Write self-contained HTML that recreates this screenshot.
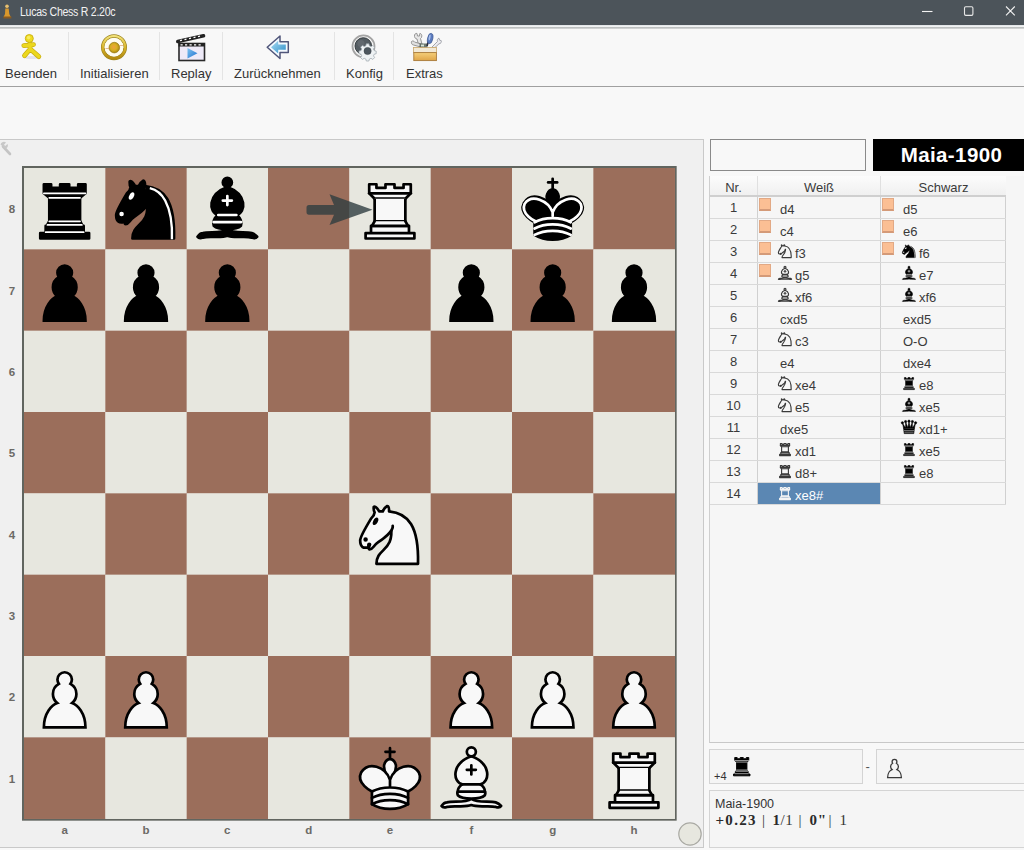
<!DOCTYPE html>
<html><head><meta charset="utf-8"><style>
*{margin:0;padding:0;box-sizing:border-box}
body{width:1024px;height:850px;overflow:hidden;background:#f8f8f8;font-family:"Liberation Sans",sans-serif;position:relative}
.abs{position:absolute}
.lbl{font-family:"Liberation Sans",sans-serif;font-size:11.5px;font-weight:bold;fill:#6c6a66}
#title{left:0;top:0;width:1024px;height:25px;background:#4c545a}
#tl1{left:0;top:25px;width:1024px;height:2px;background:linear-gradient(#dfe3e5,#f6f8f8)}
#tl2{left:0;top:27px;width:1024px;height:2px;background:linear-gradient(#b3b7b7,#dadcdc)}
#title .t{left:19.5px;top:5px;font-size:12px;letter-spacing:-0.3px;transform:scaleX(0.88);transform-origin:0 0;color:#f2f2f2;white-space:nowrap}
#toolbar{left:0;top:29px;width:1024px;height:58px;background:#f8f8f8;border-bottom:1px solid #a0a0a0}
.tb{position:absolute;top:37px;font-size:13px;color:#333;white-space:nowrap}
.sep{position:absolute;top:3px;width:1px;height:48px;background:#e4e4e4}
#bpanel{left:0;top:139px;width:704px;height:709px;border:1px solid #c9c9c9;border-left:none;background:#f0f0f0}

#wname{left:710px;top:139px;width:156px;height:32px;border:1px solid #8a8a8a;background:#f8f8f8}
#bname{left:873px;top:139px;width:151px;height:32px;background:#000;color:#fff;font-weight:bold;font-size:20.5px;letter-spacing:0.4px;line-height:32px;text-align:center;padding-left:6px}
#tbl{left:709px;top:176px;width:315px;height:567px;border-left:1px solid #cfcfcf;border-bottom:1px solid #c8c8c8;background:#f6f6f6}
.hdr{position:absolute;left:0;top:0;width:296px;height:21px;box-sizing:border-box;background:linear-gradient(#fcfcfc,#f0f0f0);border-bottom:2px solid #cfcfcf;font-size:13px;color:#3a3a3a}
.hdr div{position:absolute;top:0;height:19px;line-height:19px;padding-top:2px;text-align:center}
.h1{left:0;width:48px;border-right:1px solid #e0e0e0}
.h2{left:48px;width:123px;border-right:1px solid #e0e0e0}
.h3{left:171px;width:125px}
.row{position:absolute;left:0;width:296px;height:22px;border-bottom:1px solid #d9d9d9;font-size:13px;color:#3a3a3a}
.row>div{position:absolute;top:0;height:21px}
.num{left:0;width:48px;text-align:center;line-height:22px;border-right:1px solid #d0d0d0}
.wcell{left:48px;width:123px;border-right:1px solid #d0d0d0}
.bcell{left:171px;width:125px;border-right:1px solid #d0d0d0}
.sel{background:#5b87b3;color:#fff}

.obox{position:absolute;left:1px;top:1px;width:12px;height:13px;background:#fbbf94;border:1px solid #e2a985;border-bottom:2px solid #d49a78}
.mv{position:absolute;left:22px;top:2px;line-height:22px;white-space:nowrap}
.mv.hf{padding-left:15px}
.bcell .mv.hf{padding-left:16px}
.bcell .fig{left:-3.3px}
.fig{position:absolute;left:-4.1px;top:-0.6px;width:18px;height:18px}
#cap1{left:709px;top:749px;width:154px;height:35px;border:1px solid #d4d4d4;background:#f5f5f5}
#cap2{left:876px;top:749px;width:148px;height:35px;border:1px solid #d4d4d4;border-right:none;background:#f5f5f5}
.plus4{position:absolute;left:4px;top:19.5px;font-size:11px;color:#333}
.capfig{position:absolute;left:17.5px;top:1.8px;width:27.5px;height:27.5px}
.capfig2{position:absolute;left:3.5px;top:3.5px;width:27px;height:27px}
#dash{left:865.5px;top:759px;font-size:13px;color:#555}
#info{left:709px;top:790px;width:315px;height:58px;border:1px solid #d4d4d4;border-right:none;background:#f5f5f5}
#info .l1{position:absolute;left:5px;top:6px;font-size:12.5px;color:#333}
#info .t2{position:absolute;top:20.5px;font-size:15px;color:#333;font-family:"Liberation Serif",serif;white-space:nowrap}
#info .b{font-weight:bold;color:#2a2a2a}
</style></head><body>
<div id="title" class="abs"><div class="t abs">Lucas Chess R 2.20c</div></div><div id="tl1" class="abs"></div><div id="tl2" class="abs"></div>
<div id="toolbar" class="abs">
<div class="tb" style="left:5px">Beenden</div>
<div class="sep" style="left:68px"></div>
<div class="tb" style="left:80px">Initialisieren</div>
<div class="sep" style="left:159px"></div>
<div class="tb" style="left:171px">Replay</div>
<div class="sep" style="left:222px"></div>
<div class="tb" style="left:234px">Zurücknehmen</div>
<div class="sep" style="left:334px"></div>
<div class="tb" style="left:346px">Konfig</div>
<div class="sep" style="left:393px"></div>
<div class="tb" style="left:406px">Extras</div>
</div>
<div id="bpanel" class="abs"></div>
<svg id="boardsvg" width="1024" height="850" viewBox="0 0 1024 850" style="position:absolute;left:0;top:0">
<defs>
<symbol id="wK" viewBox="0 0 45 45"><g fill="none" fill-rule="evenodd" stroke="#000" stroke-linecap="round" stroke-linejoin="round" stroke-width="1.5"><path stroke-linejoin="miter" d="M22.5 11.63V6M20 8h5"/><path fill="#f8f8f8" stroke-linecap="butt" stroke-linejoin="miter" d="M22.5 25s4.5-7.5 3-10.5c0 0-1-2.5-3-2.5s-3 2.5-3 2.5c-1.5 3 3 10.5 3 10.5"/><path fill="#f8f8f8" d="M12.5 37c5.5 3.5 14.5 3.5 20 0v-7s9-4.5 6-10.5c-4-6.5-13.5-3.5-16 4V27v-3.5c-2.5-7.5-12-10.5-16-4-3 6 6 10.5 6 10.5v7"/><path d="M12.5 30c5.5-3 14.5-3 20 0m-20 3.5c5.5-3 14.5-3 20 0m-20 3.5c5.5-3 14.5-3 20 0"/></g></symbol>
<symbol id="wR" viewBox="0 0 45 45"><g fill="#f8f8f8" fill-rule="evenodd" stroke="#000" stroke-linecap="round" stroke-linejoin="round" stroke-width="1.5"><path stroke-linecap="butt" d="M9 39h27v-3H9v3zm3-3v-4h21v4H12zm-1-22V9h4v2h5V9h5v2h5V9h4v5"/><path d="M34 14l-3 3H14l-3-3"/><path stroke-linecap="butt" stroke-linejoin="miter" d="M31 17v12.5H14V17"/><path d="M31 29.5l1.5 2.5h-20l1.5-2.5"/><path fill="none" stroke-linejoin="miter" d="M11 14h23"/></g></symbol>
<symbol id="wB" viewBox="0 0 45 45"><g fill="none" fill-rule="evenodd" stroke="#000" stroke-linecap="round" stroke-linejoin="round" stroke-width="1.5"><g fill="#f8f8f8" stroke-linecap="butt"><path d="M9 36c3.39-.97 10.11.43 13.5-2 3.39 2.43 10.11 1.03 13.5 2 0 0 1.650.54 3 2-.68.97-1.650.99-3 .5-3.39-.97-10.11.46-13.5-1-3.39 1.46-10.110.03-13.5 1-1.354.49-2.323.47-3-.5 1.354-1.94 3-2 3-2z"/><path d="M15 32c2.5 2.5 12.5 2.5 15 0 .5-1.5 0-2 0-2 0-2.5-2.5-4-2.5-4 5.5-1.5 6-11.5-5-15.5-11 4-10.5 14-5 15.5 0 0-2.5 1.5-2.5 4 0 0-.5.5 0 2z"/><path d="M25 8a2.5 2.5 0 1 1-5 0 2.5 2.5 0 1 1 5 0z"/></g><path stroke-linejoin="miter" d="M17.5 26h10M15 30h15m-7.5-14.5v5M20 18h5"/></g></symbol>
<symbol id="wN" viewBox="0 0 45 45"><g fill="none" fill-rule="evenodd" stroke="#000" stroke-linecap="round" stroke-linejoin="round" stroke-width="1.5"><path fill="#f8f8f8" d="M22 10c10.5 1 16.5 8 16 29H15c0-9 10-6.5 8-21"/><path fill="#f8f8f8" d="M24 18c.38 2.91-5.550 7.37-8 9-3 2-2.820 4.34-5 4-1.042-.94 1.41-3.04 0-3-1 0 .19 1.23-1 2-1 0-4.003 1-4-4 0-2 6-12 6-12s1.89-1.9 2-3.5c-.73-.994-.5-2-.5-3 1-1 3 2.5 3 2.5h2s.78-1.992 2.5-3c1 0 1 3 1 3"/><path fill="#000" d="M9.5 25.5a.5.5 0 1 1-1 0 .5.5 0 1 1 1 0zm5.433-9.75a.5 1.5 30 1 1-.866-.5.5 1.5 30 1 1 .866.5z"/></g></symbol>
<symbol id="wP" viewBox="0 0 45 45"><path fill="#f8f8f8" stroke="#000" stroke-linecap="round" stroke-width="1.5" d="M22.5 9c-2.21 0-4 1.79-4 4 0 .89.29 1.71.78 2.41C17.33 16.5 16 18.59 16 21c0 2.03.94 3.84 2.41 5.03C15.41 27.09 11 31.58 11 39.5h23c0-7.92-4.41-12.41-7.410-13.47C28.06 24.84 29 23.03 29 21c0-2.41-1.330-4.5-3.280-5.59.49-.7.78-1.52.78-2.41 0-2.21-1.79-4-4-4z"/></symbol>
<symbol id="bK" viewBox="0 0 45 45"><g fill="none" fill-rule="evenodd" stroke="#000" stroke-linecap="round" stroke-linejoin="round" stroke-width="1.5"><path stroke-linejoin="miter" d="M22.5 11.63V6"/><path fill="#000" stroke-linecap="butt" stroke-linejoin="miter" d="M22.5 25s4.5-7.5 3-10.5c0 0-1-2.5-3-2.5s-3 2.5-3 2.5c-1.5 3 3 10.5 3 10.5"/><path fill="#000" d="M12.5 37c5.5 3.5 14.5 3.5 20 0v-7s9-4.5 6-10.5c-4-6.5-13.5-3.5-16 4V27v-3.5c-2.5-7.5-12-10.5-16-4-3 6 6 10.5 6 10.5v7"/><path stroke-linejoin="miter" d="M20 8h5"/><path stroke="#fff" d="M32 29.5s8.5-4 6.03-9.65C34.15 14 25 18 22.5 24.5v2.1-2.1C20 18 10.85 14 6.97 19.85 4.5 25.5 13 29.5 13 29.5"/><path stroke="#fff" d="M12.5 30c5.5-3 14.5-3 20 0m-20 3.5c5.5-3 14.5-3 20 0m-20 3.5c5.5-3 14.5-3 20 0"/></g></symbol>
<symbol id="bR" viewBox="0 0 45 45"><g fill-rule="evenodd" stroke="#000" stroke-linecap="round" stroke-linejoin="round" stroke-width="1.5"><path stroke-linecap="butt" d="M9 39h27v-3H9v3zm3.5-7l1.5-2.5h17l1.5 2.5h-20zm-.5 4v-4h21v4H12z"/><path stroke-linecap="butt" stroke-linejoin="miter" d="M14 29.5v-13h17v13H14z"/><path stroke-linecap="butt" d="M14 16.5L11 14h23l-3 2.5H14zM11 14V9h4v2h5V9h5v2h5V9h4v5H11z"/><path fill="none" stroke="#fff" stroke-linejoin="miter" stroke-width="1" d="M12 35.5h21m-20-4h19m-18-2h17m-17-13h17M11 14h23"/></g></symbol>
<symbol id="bB" viewBox="0 0 45 45"><g fill="none" fill-rule="evenodd" stroke="#000" stroke-linecap="round" stroke-linejoin="round" stroke-width="1.5"><g fill="#000" stroke-linecap="butt"><path d="M9 36c3.39-.97 10.11.43 13.5-2 3.39 2.43 10.11 1.03 13.5 2 0 0 1.65.54 3 2-.68.97-1.65.99-3 .5-3.39-.97-10.11.46-13.5-1-3.39 1.46-10.11.03-13.5 1-1.354.49-2.323.47-3-.5 1.354-1.94 3-2 3-2z"/><path d="M15 32c2.5 2.5 12.5 2.5 15 0 .5-1.5 0-2 0-2 0-2.5-2.5-4-2.5-4 5.5-1.5 6-11.5-5-15.5-11 4-10.5 14-5 15.5 0 0-2.5 1.5-2.5 4 0 0-.5.5 0 2z"/><path d="M25 8a2.5 2.5 0 1 1-5 0 2.5 2.5 0 1 1 5 0z"/></g><path stroke="#fff" stroke-linejoin="miter" d="M17.5 26h10M15 30h15m-7.5-14.5v5M20 18h5"/></g></symbol>
<symbol id="bN" viewBox="0 0 45 45"><g fill="none" fill-rule="evenodd" stroke="#000" stroke-linecap="round" stroke-linejoin="round" stroke-width="1.5"><path fill="#000" d="M22 10c10.5 1 16.5 8 16 29H15c0-9 10-6.5 8-21"/><path fill="#000" d="M24 18c.38 2.91-5.55 7.37-8 9-3 2-2.82 4.34-5 4-1.042-.94 1.41-3.04 0-3-1 0 .19 1.23-1 2-1 0-4.003 1-4-4 0-2 6-12 6-12s1.89-1.9 2-3.5c-.73-.994-.5-2-.5-3 1-1 3 2.5 3 2.5h2s.78-1.992 2.5-3c1 0 1 3 1 3"/><path fill="#fff" stroke="#fff" d="M9.5 25.5a.5.5 0 1 1-1 0 .5.5 0 1 1 1 0zm5.433-9.75a.5 1.5 30 1 1-.866-.5.5 1.5 30 1 1 .866.5z"/><path fill="none" stroke="#fff" stroke-width="1.3" stroke-linecap="butt" d="M24.6 11.1 C28 11.9 30.8 13.6 33.1 18 C35.5 22.5 37.2 29.5 36.85 39.4"/></g></symbol>
<symbol id="bP" viewBox="0 0 45 45"><path stroke="#000" stroke-linecap="round" stroke-width="1.5" d="M22.5 9c-2.21 0-4 1.79-4 4 0 .89.29 1.71.78 2.41C17.33 16.5 16 18.59 16 21c0 2.03.94 3.84 2.41 5.03C15.41 27.09 11 31.58 11 39.5h23c0-7.92-4.41-12.41-7.41-13.47C28.06 24.84 29 23.03 29 21c0-2.41-1.33-4.5-3.28-5.59.49-.7.78-1.52.78-2.41 0-2.21-1.79-4-4-4z"/></symbol>

<symbol id="fN" viewBox="0 0 45 45"><g fill="none" stroke="#3a3a3a" stroke-linecap="round" stroke-linejoin="round" stroke-width="2.8"><path d="M22 10c10.5 1 16.5 8 16 29H15c0-9 10-6.5 8-21"/><path d="M24 18c.38 2.91-5.55 7.37-8 9-3 2-2.82 4.34-5 4-1.042-.94 1.41-3.04 0-3-1 0 .19 1.23-1 2-1 0-4.003 1-4-4 0-2 6-12 6-12s1.89-1.9 2-3.5c-.73-.994-.5-2-.5-3 1-1 3 2.5 3 2.5h2s.78-1.992 2.5-3c1 0 1 3 1 3"/></g></symbol>
<symbol id="fB" viewBox="0 0 45 45"><g fill="none" stroke="#3a3a3a" stroke-linecap="round" stroke-linejoin="round" stroke-width="2.8"><path d="M9 36c3.39-.97 10.11.43 13.5-2 3.39 2.43 10.11 1.03 13.5 2 0 0 1.65.54 3 2-.68.97-1.65.99-3 .5-3.39-.97-10.11.46-13.5-1-3.39 1.46-10.11.03-13.5 1-1.354.49-2.323.47-3-.5 1.354-1.94 3-2 3-2z"/><path d="M15 32c2.5 2.5 12.5 2.5 15 0 .5-1.5 0-2 0-2 0-2.5-2.5-4-2.5-4 5.5-1.5 6-11.5-5-15.5-11 4-10.5 14-5 15.5 0 0-2.5 1.5-2.5 4 0 0-.5.5 0 2z"/><path d="M25 8a2.5 2.5 0 1 1-5 0 2.5 2.5 0 1 1 5 0z"/><path d="M17.5 26h10M15 30h15m-7.5-14.5v5M20 18h5"/></g></symbol>
<symbol id="fR" viewBox="0 0 45 45"><g fill="none" stroke="#3a3a3a" stroke-linecap="round" stroke-linejoin="round" stroke-width="2.8"><path stroke-linecap="butt" d="M9 39h27v-3H9v3zm3-3v-4h21v4H12zm-1-22V9h4v2h5V9h5v2h5V9h4v5"/><path d="M34 14l-3 3H14l-3-3"/><path d="M31 17v12.5H14V17"/><path d="M31 29.5l1.5 2.5h-20l1.5-2.5"/><path d="M11 14h23"/></g></symbol>
<symbol id="fRw" viewBox="0 0 45 45"><g fill="none" stroke="#f4f4f4" stroke-linecap="round" stroke-linejoin="round" stroke-width="2.8"><path stroke-linecap="butt" d="M9 39h27v-3H9v3zm3-3v-4h21v4H12zm-1-22V9h4v2h5V9h5v2h5V9h4v5"/><path d="M34 14l-3 3H14l-3-3"/><path d="M31 17v12.5H14V17"/><path d="M31 29.5l1.5 2.5h-20l1.5-2.5"/><path d="M11 14h23"/></g></symbol>
<symbol id="fP" viewBox="0 0 45 45"><path fill="none" stroke="#3a3a3a" stroke-linecap="round" stroke-width="2.2" d="M22.5 9c-2.21 0-4 1.79-4 4 0 .89.29 1.71.78 2.41C17.33 16.5 16 18.59 16 21c0 2.030.94 3.84 2.41 5.03C15.41 27.09 11 31.58 11 39.5h23c0-7.92-4.41-12.41-7.41-13.47C28.06 24.84 29 23.03 29 21c0-2.41-1.33-4.5-3.28-5.59.49-.7.78-1.52.78-2.41 0-2.21-1.79-4-4-4z"/></symbol>
<symbol id="fq" viewBox="0 0 45 45"><g fill="#000" stroke="#000" stroke-width="1.5" stroke-linejoin="round"><circle cx="6" cy="12" r="2.9"/><circle cx="14" cy="9" r="2.9"/><circle cx="22.5" cy="8" r="2.9"/><circle cx="31" cy="9" r="2.9"/><circle cx="39" cy="12" r="2.9"/><path d="M9 26c8.5-1.5 21-1.5 27 0l2.5-12.5L31 25l-.3-14.1-5.2 13.6-3-14.5-3 14.5-5.2-13.6L14 25 6.5 13.5 9 26z"/><path d="M9 26 L36 26 L34.5 39 L10.5 39 Z"/></g><path d="M10 31.5h25M11 35.5h23" stroke="#bbb" stroke-width="1.6"/></symbol>
<symbol id="bQ" viewBox="0 0 45 45"><g fill-rule="evenodd" stroke="#000" stroke-linecap="round" stroke-linejoin="round" stroke-width="1.5"><g stroke="none"><circle cx="6" cy="12" r="2.75"/><circle cx="14" cy="9" r="2.75"/><circle cx="22.5" cy="8" r="2.75"/><circle cx="31" cy="9" r="2.75"/><circle cx="39" cy="12" r="2.75"/></g><path stroke-linecap="butt" d="M9 26c8.5-1.5 21-1.5 27 0l2.5-12.5L31 25l-.3-14.1-5.2 13.6-3-14.5-3 14.5-5.2-13.6L14 25 6.5 13.5 9 26z"/><path stroke-linecap="butt" d="M9 26c0 2 1.5 2 2.5 4 1 1.5 1 1 .5 3.5-1.5 1-1.5 2.5-1.5 2.5-1.5 1.5.5 2.5.5 2.5 6.5 1 16.5 1 23 0 0 0 1.5-1 0-2.5 0 0 .5-1.5-1-2.5-.5-2.5-.5-2 .5-3.5 1-2 2.5-2 2.5-4-8.5-1.5-18.5-1.5-27 0z"/><path fill="none" stroke-linecap="butt" d="M11 38.5a35 35 1 0 0 23 0"/><path fill="none" stroke="#ececec" d="M11 29a35 35 1 0 1 23 0m-21.5 2.5h20m-21 3a35 35 1 0 0 22 0m-23 3a35 35 1 0 0 24 0"/></g></symbol>
</defs>
<rect x="23" y="167" width="652.67" height="652.67" fill="none" stroke="#61655f" stroke-width="2"/>
<rect x="24.00" y="168.00" width="81.63" height="81.63" fill="#e7e7df"/><rect x="105.33" y="168.00" width="81.63" height="81.63" fill="#9b6e5b"/><rect x="186.67" y="168.00" width="81.63" height="81.63" fill="#e7e7df"/><rect x="268.00" y="168.00" width="81.63" height="81.63" fill="#9b6e5b"/><rect x="349.33" y="168.00" width="81.63" height="81.63" fill="#e7e7df"/><rect x="430.67" y="168.00" width="81.63" height="81.63" fill="#9b6e5b"/><rect x="512.00" y="168.00" width="81.63" height="81.63" fill="#e7e7df"/><rect x="593.34" y="168.00" width="81.63" height="81.63" fill="#9b6e5b"/><rect x="24.00" y="249.33" width="81.63" height="81.63" fill="#9b6e5b"/><rect x="105.33" y="249.33" width="81.63" height="81.63" fill="#e7e7df"/><rect x="186.67" y="249.33" width="81.63" height="81.63" fill="#9b6e5b"/><rect x="268.00" y="249.33" width="81.63" height="81.63" fill="#e7e7df"/><rect x="349.33" y="249.33" width="81.63" height="81.63" fill="#9b6e5b"/><rect x="430.67" y="249.33" width="81.63" height="81.63" fill="#e7e7df"/><rect x="512.00" y="249.33" width="81.63" height="81.63" fill="#9b6e5b"/><rect x="593.34" y="249.33" width="81.63" height="81.63" fill="#e7e7df"/><rect x="24.00" y="330.67" width="81.63" height="81.63" fill="#e7e7df"/><rect x="105.33" y="330.67" width="81.63" height="81.63" fill="#9b6e5b"/><rect x="186.67" y="330.67" width="81.63" height="81.63" fill="#e7e7df"/><rect x="268.00" y="330.67" width="81.63" height="81.63" fill="#9b6e5b"/><rect x="349.33" y="330.67" width="81.63" height="81.63" fill="#e7e7df"/><rect x="430.67" y="330.67" width="81.63" height="81.63" fill="#9b6e5b"/><rect x="512.00" y="330.67" width="81.63" height="81.63" fill="#e7e7df"/><rect x="593.34" y="330.67" width="81.63" height="81.63" fill="#9b6e5b"/><rect x="24.00" y="412.00" width="81.63" height="81.63" fill="#9b6e5b"/><rect x="105.33" y="412.00" width="81.63" height="81.63" fill="#e7e7df"/><rect x="186.67" y="412.00" width="81.63" height="81.63" fill="#9b6e5b"/><rect x="268.00" y="412.00" width="81.63" height="81.63" fill="#e7e7df"/><rect x="349.33" y="412.00" width="81.63" height="81.63" fill="#9b6e5b"/><rect x="430.67" y="412.00" width="81.63" height="81.63" fill="#e7e7df"/><rect x="512.00" y="412.00" width="81.63" height="81.63" fill="#9b6e5b"/><rect x="593.34" y="412.00" width="81.63" height="81.63" fill="#e7e7df"/><rect x="24.00" y="493.33" width="81.63" height="81.63" fill="#e7e7df"/><rect x="105.33" y="493.33" width="81.63" height="81.63" fill="#9b6e5b"/><rect x="186.67" y="493.33" width="81.63" height="81.63" fill="#e7e7df"/><rect x="268.00" y="493.33" width="81.63" height="81.63" fill="#9b6e5b"/><rect x="349.33" y="493.33" width="81.63" height="81.63" fill="#e7e7df"/><rect x="430.67" y="493.33" width="81.63" height="81.63" fill="#9b6e5b"/><rect x="512.00" y="493.33" width="81.63" height="81.63" fill="#e7e7df"/><rect x="593.34" y="493.33" width="81.63" height="81.63" fill="#9b6e5b"/><rect x="24.00" y="574.67" width="81.63" height="81.63" fill="#9b6e5b"/><rect x="105.33" y="574.67" width="81.63" height="81.63" fill="#e7e7df"/><rect x="186.67" y="574.67" width="81.63" height="81.63" fill="#9b6e5b"/><rect x="268.00" y="574.67" width="81.63" height="81.63" fill="#e7e7df"/><rect x="349.33" y="574.67" width="81.63" height="81.63" fill="#9b6e5b"/><rect x="430.67" y="574.67" width="81.63" height="81.63" fill="#e7e7df"/><rect x="512.00" y="574.67" width="81.63" height="81.63" fill="#9b6e5b"/><rect x="593.34" y="574.67" width="81.63" height="81.63" fill="#e7e7df"/><rect x="24.00" y="656.00" width="81.63" height="81.63" fill="#e7e7df"/><rect x="105.33" y="656.00" width="81.63" height="81.63" fill="#9b6e5b"/><rect x="186.67" y="656.00" width="81.63" height="81.63" fill="#e7e7df"/><rect x="268.00" y="656.00" width="81.63" height="81.63" fill="#9b6e5b"/><rect x="349.33" y="656.00" width="81.63" height="81.63" fill="#e7e7df"/><rect x="430.67" y="656.00" width="81.63" height="81.63" fill="#9b6e5b"/><rect x="512.00" y="656.00" width="81.63" height="81.63" fill="#e7e7df"/><rect x="593.34" y="656.00" width="81.63" height="81.63" fill="#9b6e5b"/><rect x="24.00" y="737.34" width="81.63" height="81.63" fill="#9b6e5b"/><rect x="105.33" y="737.34" width="81.63" height="81.63" fill="#e7e7df"/><rect x="186.67" y="737.34" width="81.63" height="81.63" fill="#9b6e5b"/><rect x="268.00" y="737.34" width="81.63" height="81.63" fill="#e7e7df"/><rect x="349.33" y="737.34" width="81.63" height="81.63" fill="#9b6e5b"/><rect x="430.67" y="737.34" width="81.63" height="81.63" fill="#e7e7df"/><rect x="512.00" y="737.34" width="81.63" height="81.63" fill="#9b6e5b"/><rect x="593.34" y="737.34" width="81.63" height="81.63" fill="#e7e7df"/><use href="#bR" x="24.00" y="168.00" width="81.33" height="81.33"/><use href="#bN" x="105.33" y="168.00" width="81.33" height="81.33"/><use href="#bB" x="186.67" y="168.00" width="81.33" height="81.33"/><use href="#wR" x="349.33" y="168.00" width="81.33" height="81.33"/><use href="#bK" x="512.00" y="168.00" width="81.33" height="81.33"/><use href="#bP" x="24.00" y="249.33" width="81.33" height="81.33"/><use href="#bP" x="105.33" y="249.33" width="81.33" height="81.33"/><use href="#bP" x="186.67" y="249.33" width="81.33" height="81.33"/><use href="#bP" x="430.67" y="249.33" width="81.33" height="81.33"/><use href="#bP" x="512.00" y="249.33" width="81.33" height="81.33"/><use href="#bP" x="593.34" y="249.33" width="81.33" height="81.33"/><use href="#wN" x="349.33" y="493.33" width="81.33" height="81.33"/><use href="#wP" x="24.00" y="656.00" width="81.33" height="81.33"/><use href="#wP" x="105.33" y="656.00" width="81.33" height="81.33"/><use href="#wP" x="430.67" y="656.00" width="81.33" height="81.33"/><use href="#wP" x="512.00" y="656.00" width="81.33" height="81.33"/><use href="#wP" x="593.34" y="656.00" width="81.33" height="81.33"/><use href="#wK" x="349.33" y="737.34" width="81.33" height="81.33"/><use href="#wB" x="430.67" y="737.34" width="81.33" height="81.33"/><use href="#wR" x="593.34" y="737.34" width="81.33" height="81.33"/>
<path d="M309 205 L334 205 L329.5 194.3 L372.5 209.8 L329.5 225 L334 214.8 L309 214.8 Q306.5 214.8 306.5 212 L306.5 207.8 Q306.5 205 309 205 Z" fill="#2f3d40" fill-opacity="0.8"/>
<text x="12" y="213.2" text-anchor="middle" class="lbl">8</text><text x="12" y="294.5" text-anchor="middle" class="lbl">7</text><text x="12" y="375.8" text-anchor="middle" class="lbl">6</text><text x="12" y="457.2" text-anchor="middle" class="lbl">5</text><text x="12" y="538.5" text-anchor="middle" class="lbl">4</text><text x="12" y="619.8" text-anchor="middle" class="lbl">3</text><text x="12" y="701.2" text-anchor="middle" class="lbl">2</text><text x="12" y="782.5" text-anchor="middle" class="lbl">1</text><text x="64.7" y="834" text-anchor="middle" class="lbl">a</text><text x="146.0" y="834" text-anchor="middle" class="lbl">b</text><text x="227.3" y="834" text-anchor="middle" class="lbl">c</text><text x="308.7" y="834" text-anchor="middle" class="lbl">d</text><text x="390.0" y="834" text-anchor="middle" class="lbl">e</text><text x="471.3" y="834" text-anchor="middle" class="lbl">f</text><text x="552.7" y="834" text-anchor="middle" class="lbl">g</text><text x="634.0" y="834" text-anchor="middle" class="lbl">h</text>
<path d="M3 146.5 L10 154" stroke="#c4c4c4" stroke-width="2.6" stroke-linecap="round"/><path d="M0.5 144.5 C1.5 141.5 4.5 141 6 142.5 L4 144.8 L5.2 146 L7.5 144 C8.5 146 7.5 148.5 5 148.5 Z" fill="#c8c8c8"/>
<circle cx="690" cy="834" r="11.2" fill="#e7e7df" stroke="#a9a9a3" stroke-width="1.2"/>
</svg>

<div class="abs" id="wname"></div>
<div class="abs" id="bname">Maia-1900</div>
<div class="abs" id="tbl">
 <div class="hdr"><div class="h1">Nr.</div><div class="h2">Weiß</div><div class="h3">Schwarz</div></div>
 <div class="row" style="top:21px"><div class="num">1</div><div class="wcell"><div class="obox"></div><div class="mv">d4</div></div><div class="bcell"><div class="obox"></div><div class="mv">d5</div></div></div><div class="row" style="top:43px"><div class="num">2</div><div class="wcell"><div class="obox"></div><div class="mv">c4</div></div><div class="bcell"><div class="obox"></div><div class="mv">e6</div></div></div><div class="row" style="top:65px"><div class="num">3</div><div class="wcell"><div class="obox"></div><div class="mv hf"><svg class="fig" viewBox="0 0 45 45"><use href="#fN"/></svg>f3</div></div><div class="bcell"><div class="obox"></div><div class="mv hf"><svg class="fig" viewBox="0 0 45 45"><use href="#bN"/></svg>f6</div></div></div><div class="row" style="top:87px"><div class="num">4</div><div class="wcell"><div class="obox"></div><div class="mv hf"><svg class="fig" viewBox="0 0 45 45"><use href="#fB"/></svg>g5</div></div><div class="bcell"><div class="mv hf"><svg class="fig" viewBox="0 0 45 45"><use href="#bB"/></svg>e7</div></div></div><div class="row" style="top:109px"><div class="num">5</div><div class="wcell"><div class="mv hf"><svg class="fig" viewBox="0 0 45 45"><use href="#fB"/></svg>xf6</div></div><div class="bcell"><div class="mv hf"><svg class="fig" viewBox="0 0 45 45"><use href="#bB"/></svg>xf6</div></div></div><div class="row" style="top:131px"><div class="num">6</div><div class="wcell"><div class="mv">cxd5</div></div><div class="bcell"><div class="mv">exd5</div></div></div><div class="row" style="top:153px"><div class="num">7</div><div class="wcell"><div class="mv hf"><svg class="fig" viewBox="0 0 45 45"><use href="#fN"/></svg>c3</div></div><div class="bcell"><div class="mv">O-O</div></div></div><div class="row" style="top:175px"><div class="num">8</div><div class="wcell"><div class="mv">e4</div></div><div class="bcell"><div class="mv">dxe4</div></div></div><div class="row" style="top:197px"><div class="num">9</div><div class="wcell"><div class="mv hf"><svg class="fig" viewBox="0 0 45 45"><use href="#fN"/></svg>xe4</div></div><div class="bcell"><div class="mv hf"><svg class="fig" viewBox="0 0 45 45"><use href="#bR"/></svg>e8</div></div></div><div class="row" style="top:219px"><div class="num">10</div><div class="wcell"><div class="mv hf"><svg class="fig" viewBox="0 0 45 45"><use href="#fN"/></svg>e5</div></div><div class="bcell"><div class="mv hf"><svg class="fig" viewBox="0 0 45 45"><use href="#bB"/></svg>xe5</div></div></div><div class="row" style="top:241px"><div class="num">11</div><div class="wcell"><div class="mv">dxe5</div></div><div class="bcell"><div class="mv hf"><svg class="fig" viewBox="0 0 45 45"><use href="#fq"/></svg>xd1+</div></div></div><div class="row" style="top:263px"><div class="num">12</div><div class="wcell"><div class="mv hf"><svg class="fig" viewBox="0 0 45 45"><use href="#fR"/></svg>xd1</div></div><div class="bcell"><div class="mv hf"><svg class="fig" viewBox="0 0 45 45"><use href="#bR"/></svg>xe5</div></div></div><div class="row" style="top:285px"><div class="num">13</div><div class="wcell"><div class="mv hf"><svg class="fig" viewBox="0 0 45 45"><use href="#fR"/></svg>d8+</div></div><div class="bcell"><div class="mv hf"><svg class="fig" viewBox="0 0 45 45"><use href="#bR"/></svg>e8</div></div></div><div class="row" style="top:307px"><div class="num">14</div><div class="wcell sel"><div class="mv hf"><svg class="fig" viewBox="0 0 45 45"><use href="#fRw"/></svg>xe8#</div></div><div class="bcell"><div class="mv"></div></div></div>
</div>
<div class="abs" id="cap1"><span class="plus4">+4</span><svg class="capfig" viewBox="0 0 45 45"><use href="#bR"/></svg></div>
<div class="abs" id="dash">-</div>
<div class="abs" id="cap2"><svg class="capfig2" viewBox="0 0 45 45"><use href="#fP"/></svg></div>
<div class="abs" id="info"><div class="l1">Maia-1900</div><span class="t2 b" style="left:5.5px;letter-spacing:1.3px">+0.23</span><span class="t2" style="left:52px">|</span><span class="t2 b" style="left:62.5px">1</span><span class="t2" style="left:70.5px;letter-spacing:0.5px">/1</span><span class="t2" style="left:88.5px">|</span><span class="t2 b" style="left:99.5px;letter-spacing:0.8px">0"</span><span class="t2" style="left:118.5px">|</span><span class="t2" style="left:129.5px">1</span></div>

<svg class="abs" style="left:0;top:0" width="1024" height="90" viewBox="0 0 1024 90">
<defs>
<linearGradient id="gold" x1="0" y1="0" x2="0" y2="1"><stop offset="0" stop-color="#f2e27a"/><stop offset="0.5" stop-color="#d9b52a"/><stop offset="1" stop-color="#b38a10"/></linearGradient>
<radialGradient id="goldc" cx="0.45" cy="0.45" r="0.6"><stop offset="0" stop-color="#f0a040"/><stop offset="0.5" stop-color="#d8b020"/><stop offset="1" stop-color="#a08010"/></radialGradient>
<linearGradient id="blue" x1="0" y1="0" x2="1" y2="1"><stop offset="0" stop-color="#a8dcf4"/><stop offset="1" stop-color="#2f8fc8"/></linearGradient>
<linearGradient id="playb" x1="0" y1="0" x2="1" y2="1"><stop offset="0" stop-color="#7fc4f0"/><stop offset="1" stop-color="#1f6fd0"/></linearGradient>
<linearGradient id="boxg" x1="0" y1="0" x2="0" y2="1"><stop offset="0" stop-color="#f5cf7a"/><stop offset="1" stop-color="#dfa548"/></linearGradient>
</defs>
<!-- title pawn -->
<g>
<circle cx="7" cy="6.2" r="1.8" fill="#e8c070"/>
<path d="M5.3 8.5 L8.7 8.5 L9.3 14 L10.8 17 L3.6 17 L5 14 Z" fill="#d9982c"/>
<rect x="3.4" y="16.5" width="8" height="2" fill="#8a5a20"/>
</g>
<!-- window controls -->
<path d="M922 11.5h10.5" stroke="#f4f4f4" stroke-width="1.1"/>
<rect x="964.5" y="6.8" width="8.4" height="8.6" rx="1.3" fill="none" stroke="#e8e8e8" stroke-width="1.1"/>
<path d="M1006 6.5l8.8 8.8M1014.8 6.5l-8.8 8.8" stroke="#f0f0f0" stroke-width="1.1"/>
<!-- Beenden: yellow man -->
<g>
<ellipse cx="31.5" cy="57.5" rx="7" ry="1.6" fill="#c8c8e0" opacity="0.45"/>
<path d="M23.8 45.6 L33.5 44.6 M29.8 44 L30.2 49 L24.5 55.6 M30.2 49 L38.8 56.6" stroke="#c9ae10" stroke-width="4.8" stroke-linecap="round" stroke-linejoin="round" fill="none"/>
<path d="M23.8 45.6 L33.5 44.6 M29.8 44 L30.2 49 L24.5 55.6 M30.2 49 L38.8 56.6" stroke="#ecd81e" stroke-width="3.4" stroke-linecap="round" stroke-linejoin="round" fill="none"/>
<circle cx="29.3" cy="38.5" r="4" fill="#eedc20" stroke="#c9ae10" stroke-width="0.9"/>
<circle cx="28.6" cy="37.6" r="1.8" fill="#f8ec60"/>
</g>
<!-- Initialisieren: gold ring -->
<g>
<circle cx="114" cy="47.2" r="11.2" fill="none" stroke="#9c8420" stroke-width="3.6"/>
<circle cx="114" cy="47.2" r="11.2" fill="none" stroke="url(#gold)" stroke-width="2.2"/>
<circle cx="114" cy="47.2" r="9.3" fill="#fffdf0"/>
<circle cx="114.3" cy="47.6" r="5.3" fill="url(#goldc)" stroke="#9a7810" stroke-width="0.7"/>
<path d="M105.5 48.5h3.5M119.5 45.5h3.5" stroke="#dc9c70" stroke-width="0.7"/>
</g>
<!-- Replay: clapperboard -->
<g>
<rect x="179" y="43.5" width="25.5" height="17" fill="#eeeaf8" stroke="#2a2a2a" stroke-width="1.6"/>
<rect x="178.5" y="43" width="26.5" height="3.5" fill="#222"/>
<path d="M180.5 44.8h2.2M185 44.8h2.2M189.5 44.8h2.2M194 44.8h2.2M198.5 44.8h2.2" stroke="#fff" stroke-width="1.3"/>
<path d="M177.8 41.5 L203.5 35.8" stroke="#222" stroke-width="3.6" stroke-linecap="round"/>
<path d="M180 40.6l2-.45M184.5 39.6l2-.45M189 38.6l2-.45M193.5 37.6l2-.45M198 36.6l2-.45" stroke="#fff" stroke-width="1.3"/>
<path d="M187.5 48 L187.5 58.5 L197.5 53.2 Z" fill="url(#playb)"/>
</g>
<!-- Zurücknehmen: arrow -->
<g>
<path d="M267.2 47.2 L280 36 L280 41.8 L288.3 41.8 L288.3 52.6 L280 52.6 L280 58.5 Z" fill="#f4faff" stroke="#50567a" stroke-width="1.5" stroke-linejoin="round"/>
<path d="M271 47.2 L278.2 40.8 L278.2 44.5 L285.8 44.5 L285.8 49.8 L278.2 49.8 L278.2 53.6 Z" fill="url(#blue)"/>
</g>
<!-- Konfig -->
<g>
<circle cx="363.5" cy="46.3" r="11" fill="#f6f6f6" stroke="#a4a4a4" stroke-width="1.8"/>
<circle cx="363.3" cy="46" r="8.3" fill="#545c62" stroke="#2e3438" stroke-width="0.9"/>
<circle cx="361" cy="43.5" r="3.5" fill="#6a7076" opacity="0.6"/>
<g transform="translate(367.6 51)">
<path d="M-1.3 -7.2h2.6l.5 2 1.6.7 1.8-1.1 1.8 1.8-1.1 1.8.7 1.6 2 .5v2.6l-2 .5-.7 1.6 1.1 1.8-1.8 1.8-1.8-1.1-1.6.7-.5 2h-2.6l-.5-2-1.6-.7-1.8 1.1-1.8-1.8 1.1-1.8-.7-1.6-2-.5v-2.6l2-.5.7-1.6-1.1-1.8 1.8-1.8 1.8 1.1 1.6-.7z" fill="#eef2f4" stroke="#9aa4aa" stroke-width="0.7"/>
<circle r="3.6" fill="#4c565e" stroke="#30383e" stroke-width="0.5"/>
</g>
</g>
<!-- Extras -->
<g>
<path d="M414.5 36.5 C414 34 416 33 417 33.5 L417.5 36 L419.5 36 L419.8 33.5 C421 33.2 422.5 35 421.5 37.5 L420.5 38.5 L422.5 46 L419 46.5 L417 39 C415.5 38.8 414.8 37.8 414.5 36.5 Z" fill="#e6e6e6" stroke="#8c8c8c" stroke-width="0.9"/>
<path d="M411.5 41.5 C412.5 40.5 414 41 414.5 42 L423 44.5 L422.5 47.5 L413.5 45 C412 45 411 43 411.5 41.5 Z" fill="#e0e0e0" stroke="#8a8a8a" stroke-width="0.9"/>
<rect x="419.5" y="43.5" width="8" height="4.5" fill="#3e4e44" opacity="0.75"/>
<rect x="421" y="44.5" width="3" height="2" fill="#d8e4d8"/>
<path d="M427 46 L429 39" stroke="#2a2a3a" stroke-width="1.6"/>
<ellipse cx="430.2" cy="38.5" rx="2.6" ry="5.2" transform="rotate(12 430.2 38.5)" fill="#5b7bbf" stroke="#3f5a94" stroke-width="0.7"/>
<ellipse cx="429.6" cy="37.5" rx="0.9" ry="3" transform="rotate(12 429.6 37.5)" fill="#a8c0ec"/>
<path d="M432 47 L437.5 41.5 C437 40 437.5 38.5 439 38.2 L439.6 40.2 L441.2 40.6 C441.8 42 440.8 43.8 439 43.8 L434.5 48 Z" fill="#ececf0" stroke="#9a9ca4" stroke-width="0.9"/>
<rect x="413.5" y="47.5" width="23" height="5.3" fill="#f2e9d6" stroke="#c9a66a" stroke-width="0.8"/>
<rect x="413.8" y="52.6" width="22.6" height="8" fill="url(#boxg)" stroke="#a97a3a" stroke-width="0.9"/>
</g>
</svg>
</body></html>
